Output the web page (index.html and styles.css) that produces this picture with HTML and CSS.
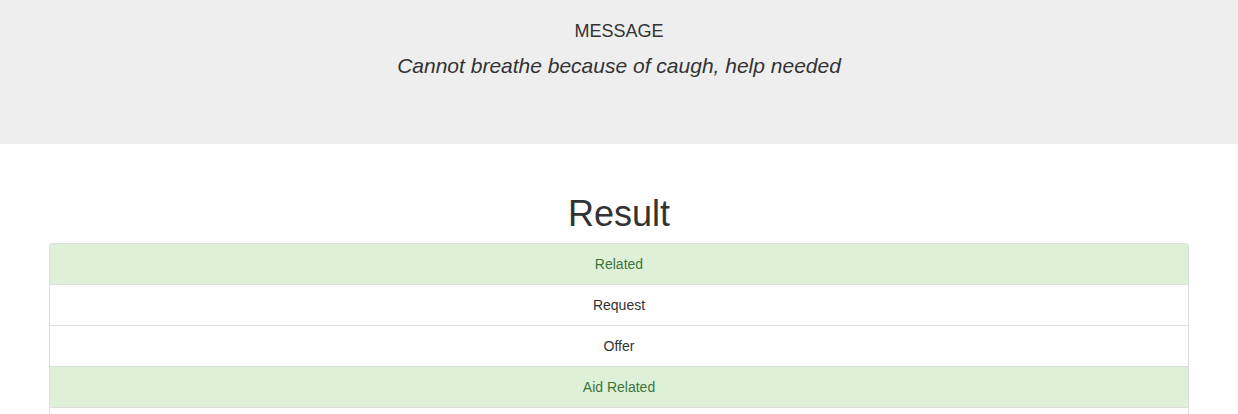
FILE: index.html
```html
<!DOCTYPE html>
<html>
<head>
<meta charset="utf-8">
<link rel="stylesheet" href="styles.css">
</head>
<body>
<div class="jumbotron">
  <div class="msg-label">MESSAGE</div>
  <div class="msg-text">Cannot breathe because of caugh, help needed</div>
</div>
<div class="container">
  <h1 class="title">Result</h1>
  <ul class="list-group">
    <li class="item success">Related</li>
    <li class="item">Request</li>
    <li class="item">Offer</li>
    <li class="item success">Aid Related</li>
    <li class="item item-empty"></li>
  </ul>
</div>
</body>
</html>
```
FILE: styles.css
```css
html, body {
  margin: 0;
  padding: 0;
  background: #fff;
  font-family: "Liberation Sans", Arial, Helvetica, sans-serif;
  color: #333;
  font-size: 14px;
  line-height: 20px;
}
.jumbotron {
  background: #eee;
  height: 144px;
  box-sizing: border-box;
  padding-top: 20px;
  text-align: center;
}
.msg-label {
  font-size: 18px;
  line-height: 22px;
}
.msg-text {
  margin-top: 9px;
  font-size: 21px;
  line-height: 30px;
  font-style: italic;
}
.container {
  width: 1140px;
  margin: 0 auto;
  padding-top: 50px;
}
.title {
  margin: 0 0 9px;
  font-size: 36px;
  font-weight: 500;
  line-height: 40px;
  text-align: center;
}
.list-group {
  list-style: none;
  margin: 0;
  padding: 0;
}
.item {
  padding: 10px 15px;
  border: 1px solid #ddd;
  margin-bottom: -1px;
  text-align: center;
  background: #fff;
}
.item-empty {
  height: 20px;
}
.item:first-child {
  border-top-left-radius: 4px;
  border-top-right-radius: 4px;
}
.item.success {
  background: #dff0d8;
  color: #3c763d;
}
```
